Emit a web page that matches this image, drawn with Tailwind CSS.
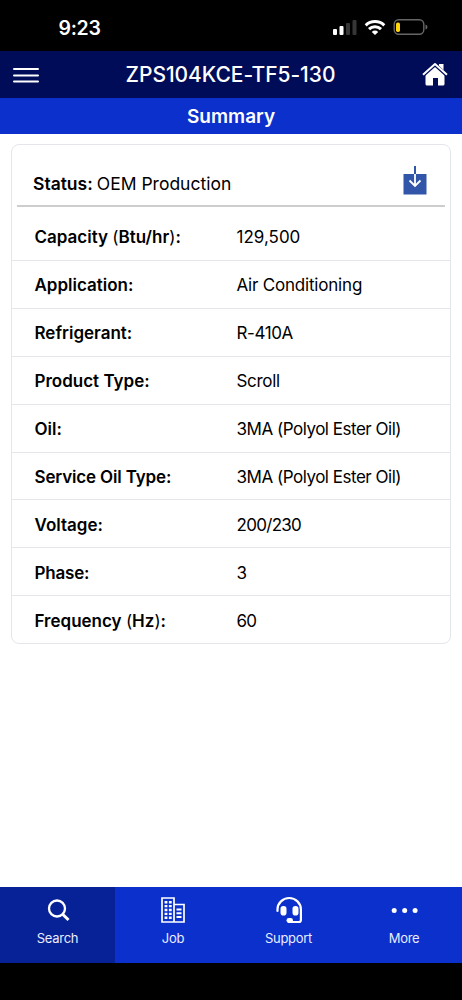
<!DOCTYPE html>
<html lang="en">
<head>
<meta charset="utf-8">
<meta name="viewport" content="width=device-width, initial-scale=1">
<title>Summary</title>
<script src="https://cdn.jsdelivr.net/npm/@tailwindcss/browser@4"></script>
</head>
<body class="w-[462px] h-[1000px] overflow-hidden bg-white text-black font-['Inter','Liberation_Sans',sans-serif] flex flex-col">
<div class="h-[51px] shrink-0 bg-black flex items-start justify-between pl-[58.500px] pr-[34px] text-white">
  <span class="mt-[14px] text-[19.500px] leading-7 font-semibold tracking-[-0.3px]">9:23</span>
  <svg class="mt-[18px]" width="95" height="18" viewBox="0 0 95 18">
    <g fill="#fff"><rect x="0" y="11" width="4" height="6" rx="1"/><rect x="6.5" y="8" width="4" height="9" rx="1"/></g>
    <g fill="#363636"><rect x="13" y="5" width="4" height="12" rx="1"/><rect x="19.5" y="2" width="4" height="15" rx="1"/></g>
    <g fill="none" stroke="#fff" stroke-width="3"><path d="M32.7 7.300a13.500 13.500 0 0 1 18.600 0"/><path d="M36 11.200a8.700 8.700 0 0 1 12 0"/></g>
    <path fill="#fff" d="M38.800 13.900a4.500 4.500 0 0 1 6.400 0L42 17z"/>
    <rect x="61.200" y="1.700" width="29.600" height="14.600" rx="4.500" fill="none" stroke="#666" stroke-width="1.400"/>
    <rect x="63" y="4.500" width="4" height="9.500" rx="1.700" fill="#ffd60a"/>
    <path fill="#666" d="M92.500 6.500q2 .5 2 2.500t-2 2.500z"/>
  </svg>
</div>
<header class="h-[47px] shrink-0 bg-[#000c57] flex items-center justify-between pl-[13px] pr-[14px] text-white">
  <svg width="26" height="18" viewBox="0 0 26 18" fill="none" stroke="#fff" stroke-width="2" stroke-linecap="round"><path d="M1 3h24M1 9.500h24M1 15.500h24"/></svg>
  <h1 class="text-[21px] leading-7 font-medium whitespace-nowrap tracking-[-0.05px]">ZPS104KCE-TF5-130</h1>
  <svg width="26" height="25" viewBox="0 0 26 25"><path fill="#fff" d="M3.500 12.500 13 4l9.500 8.500V22q0 1.500-1.500 1.500h-5V16h-5v7.500H5Q3.500 23.500 3.500 22zM17 2h4.500v7L17 5z"/><path fill="none" stroke="#000c57" stroke-width="3.500" d="M1.500 13 13 2.700 24.500 13"/><path fill="none" stroke="#fff" stroke-width="2" stroke-linejoin="round" d="M1 12.700 13 2 25 12.700"/></svg>
</header>
<div class="h-[35.500px] shrink-0 bg-[#0b30cc] text-white text-[19px] leading-[37px] text-center font-semibold">Summary</div>
<main class="flex-1 px-[11px] pt-[10.500px]">
  <section class="h-[500px] rounded-[8px] border border-[#e5e6ec]">
    <div class="h-[62px] mx-[5px] pl-4 pr-[18px] border-b-2 border-[#cdcdcd] flex items-start justify-between text-[17.500px] leading-6">
      <p class="mt-[27px] flex gap-[4px] whitespace-nowrap"><b class="font-semibold">Status:</b> <span>OEM Production</span></p>
      <svg class="mt-[20px]" width="24" height="30" viewBox="0 0 24 30"><path fill="#3155a8" d="M.5 9h23v20.500H.5zM11 1h2v9h-2z"/><path fill="none" stroke="#fff" stroke-width="1.800" d="M12 9v12M6.500 15.500 12 21l5.500-5.500"/></svg>
    </div>
    <dl class="text-[17px] leading-6 divide-y divide-[#e5e5ea]">
      <div class="h-[54px] pt-[18px] pl-[22.500px] flex"><dt class="w-[202px] font-semibold">Capacity <span class="font-normal">(</span>Btu/hr<span class="font-normal">)</span>:</dt><dd>129,500</dd></div>
      <div class="h-[47.900px] pt-[12px] pl-[22.500px] flex"><dt class="w-[202px] font-semibold">Application:</dt><dd class="tracking-[-0.2px]">Air Conditioning</dd></div>
      <div class="h-[47.900px] pt-[12px] pl-[22.500px] flex"><dt class="w-[202px] font-semibold">Refrigerant:</dt><dd class="tracking-[-0.4px]">R-410A</dd></div>
      <div class="h-[47.900px] pt-[12px] pl-[22.500px] flex"><dt class="w-[202px] font-semibold">Product Type:</dt><dd class="tracking-[-0.3px]">Scroll</dd></div>
      <div class="h-[47.900px] pt-[12px] pl-[22.500px] flex"><dt class="w-[202px] font-semibold">Oil:</dt><dd class="tracking-[-0.480px]">3MA (Polyol Ester Oil)</dd></div>
      <div class="h-[47.900px] pt-[12px] pl-[22.500px] flex"><dt class="w-[202px] font-semibold tracking-[-0.150px]">Service Oil Type:</dt><dd class="tracking-[-0.480px]">3MA (Polyol Ester Oil)</dd></div>
      <div class="h-[47.900px] pt-[12.500px] pl-[22.500px] flex"><dt class="w-[202px] font-semibold">Voltage:</dt><dd class="tracking-[-0.700px]">200/230</dd></div>
      <div class="h-[47.900px] pt-[12.500px] pl-[22.500px] flex"><dt class="w-[202px] font-semibold tracking-[-0.200px]">Phase:</dt><dd>3</dd></div>
      <div class="h-[47.900px] pt-[12.500px] pl-[22.500px] flex"><dt class="w-[202px] font-semibold">Frequency <span class="font-normal">(</span>Hz<span class="font-normal">)</span>:</dt><dd class="tracking-[-0.700px]">60</dd></div>
    </dl>
  </section>
</main>
<nav class="h-[76px] shrink-0 bg-[#0b30cc] grid grid-cols-[115px_116px_115px_116px] text-[13px] leading-5 tracking-[-0.300px] text-[#e9edff]">
  <a class="bg-[#072296] flex flex-col items-center pt-2">
    <svg width="30" height="30" viewBox="0 0 30 30" fill="none" stroke="#fff" stroke-width="2.300"><circle cx="14" cy="13.500" r="8"/><path stroke-width="3" d="m19.700 19.200 5.800 5.800"/></svg>
    <span class="mt-[3px]">Search</span></a>
  <a class="flex flex-col items-center pt-2">
    <svg width="30" height="30" viewBox="0 0 30 30" fill="none" stroke="#fff"><path stroke-width="1.700" d="M4 3h12v24H4zM16 9.500h10V27H16"/><path stroke-width="2.800" stroke-dasharray="2.400 1.500" d="M8 6v18.500M12.300 6v18.500"/><path stroke-width="2" d="M18.500 14.500h5M18.500 18.300h5M18.500 22h5"/></svg>
    <span class="mt-[3px]">Job</span></a>
  <a class="flex flex-col items-center pt-2">
    <svg width="30" height="30" viewBox="0 0 30 30"><path fill="none" stroke="#fff" stroke-width="2.200" stroke-linecap="round" stroke-linejoin="round" d="M3.500 16V14.500a11.700 11.500 0 0 1 23.400 0v10.500q0 2-2 2H15"/><rect x="6.500" y="11" width="6" height="9.500" rx="2.800" fill="#fff"/><rect x="18.500" y="11" width="6" height="9.500" rx="2.800" fill="#fff"/><rect x="12.500" y="23" width="6.500" height="5" rx="2.400" fill="#fff"/></svg>
    <span class="mt-[3px]">Support</span></a>
  <a class="flex flex-col items-center pt-2">
    <svg width="30" height="30" viewBox="0 0 30 30" fill="#fff"><circle cx="5.200" cy="15.500" r="2.500"/><circle cx="15.700" cy="15.500" r="2.500"/><circle cx="26.100" cy="15.500" r="2.500"/></svg>
    <span class="mt-[3px]">More</span></a>
</nav>
<div class="h-[37px] shrink-0 bg-black"></div>
</body>
</html>
